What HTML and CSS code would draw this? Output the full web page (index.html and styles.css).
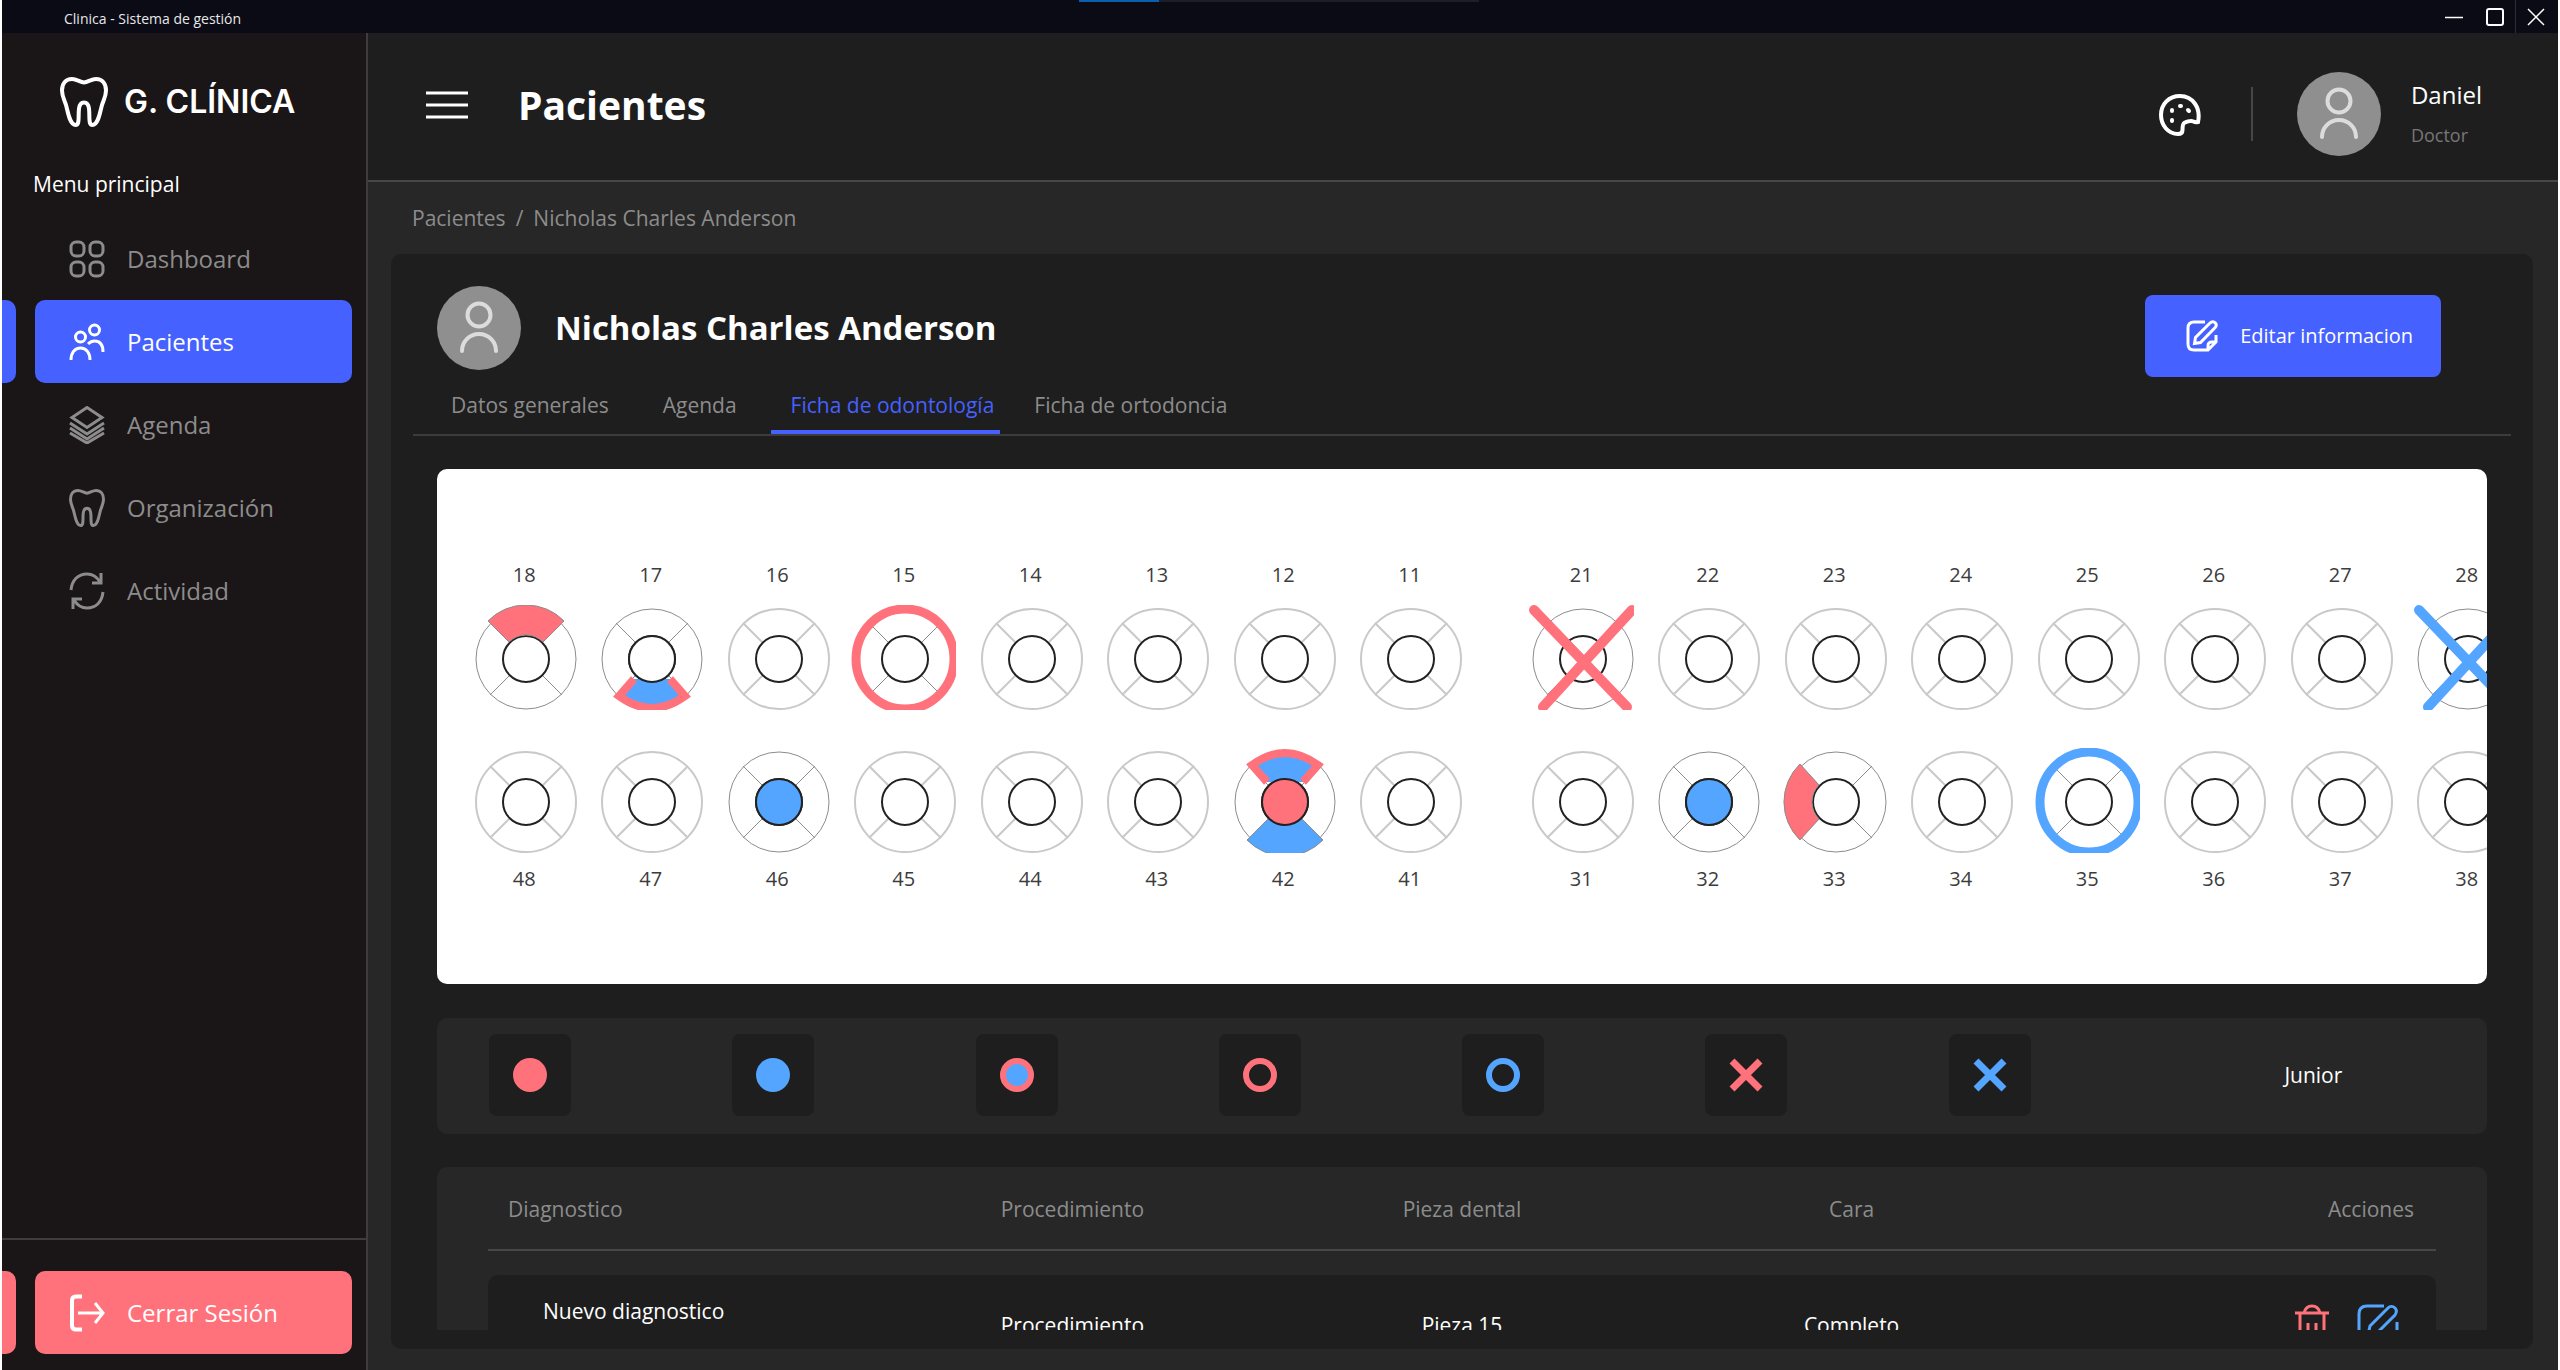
FILE: index.html
```html
<!DOCTYPE html>
<html lang="es">
<head>
<meta charset="utf-8">
<title>Clinica - Sistema de gestión</title>
<link rel="stylesheet" href="styles.css">
</head>
<body>
<svg class="defs" aria-hidden="true">
  <defs>
    <symbol id="tooth" viewBox="-54 -54 105 105">
      <circle r="50" fill="none" stroke="currentColor"/>
      <path d="M-36-36-17-17M36-36 17-17M-36 36-17 17M36 36 17 17" stroke="currentColor"/>
      <circle class="core" r="23"/>
    </symbol>
    <symbol id="molar" viewBox="0 0 48 50">
      <path d="M24 5.500C20 5 16.500 2 12 2 5.500 2 2 7 2 13.500c0 5.500 2 8.500 4 14.500 1.800 6 3.500 20 9.500 20 4.500 0 2.500-8 3.500-16.500.6-4.500 2-6 5-6s4.400 1.500 5 6c1 8.500-1 16.500 3.500 16.500 6 0 7.700-14 9.500-20 2-6 4-9 4-14.500C46 7 42.500 2 36 2c-4.500 0-8 3-12 3.500Z"/>
    </symbol>
    <symbol id="person" viewBox="0 0 84 84">
      <circle class="disc" cx="42" cy="42" r="42"/>
      <circle cx="42" cy="29" r="11.500"/>
      <path d="M25 65c0-9 7-17 17-17s17 8 17 17" stroke-linecap="round"/>
    </symbol>
    <symbol id="edit" viewBox="0 0 32 32">
      <path d="M19 2H8C4 2 2 4 2 8v16c0 4 2 6 6 6h14l8-8v-7M30 22h-4c-3 0-4 1-4 4v4M8.500 23.500l1-6L24 3c2-2 4-1.500 5.200-.2 1.200 1.300 1.200 3.200 0 4.700L14.500 22.500Z"/>
    </symbol>
  </defs>
</svg>

<div class="window">
  <div class="titlebar">
    <span class="titlebar-text">Clinica - Sistema de gestión</span>
    <span class="progress"><i></i></span>
    <div class="window-controls">
      <button type="button" aria-label="Minimizar"><svg viewBox="0 0 18 18"><path d="M0 9.500h18"/></svg></button>
      <button type="button" aria-label="Maximizar"><svg viewBox="0 0 18 18"><rect x="1" y="1" width="16" height="16" rx="2" stroke-width="2"/></svg></button>
      <button type="button" class="close" aria-label="Cerrar"><svg viewBox="0 0 18 18"><path d="M1 1l16 16M17 1 1 17"/></svg></button>
    </div>
  </div>

  <aside class="sidebar">
    <div class="brand">
      <svg class="brand-icon"><use href="#molar"/></svg>
      <span>G. CLÍNICA</span>
    </div>
    <p class="menu-title">Menu principal</p>
    <nav class="menu">
      <a class="menu-item" href="#dashboard">
        <svg viewBox="0 0 36 38"><rect x="2" y="2" width="13" height="14" rx="5"/><rect x="21" y="2" width="13" height="14" rx="5"/><rect x="2" y="22" width="13" height="14" rx="5"/><rect x="21" y="22" width="13" height="14" rx="5"/></svg>
        <span>Dashboard</span>
      </a>
      <a class="menu-item active" href="#pacientes">
        <svg viewBox="0 0 36 38"><circle cx="11.500" cy="14" r="5"/><circle cx="25.500" cy="7" r="5"/><path d="M2 37c0-7 3.500-12 9.500-12S21 30 21 37M19 21c2-2 4-3 6.500-3 5.500 0 8.500 4 8.500 11"/></svg>
        <span>Pacientes</span>
      </a>
      <a class="menu-item" href="#agenda">
        <svg viewBox="0 0 36 38"><path d="M18 1.500 33 11.500 18 21.500 3 11.500ZM1 17l17 11 17-11M1 22l17 11 17-11M1 27l17 10 17-10"/></svg>
        <span>Agenda</span>
      </a>
      <a class="menu-item" href="#organizacion">
        <svg class="molar" viewBox="0 0 48 50" preserveAspectRatio="none"><use href="#molar" width="48" height="50"/></svg>
        <span>Organización</span>
      </a>
      <a class="menu-item" href="#actividad">
        <svg viewBox="0 0 36 38"><path d="M2 18C3 8 9 2 18 2c6 0 10 3 13 8M32 1v10H23M34 20c-1 10-7 16-16 16-6 0-10-3-13-8M4 37V27h9"/></svg>
        <span>Actividad</span>
      </a>
    </nav>
    <div class="sidebar-foot">
      <button type="button" class="menu-item logout">
        <svg viewBox="0 0 36 38"><path d="M13 2.500H7c-3 0-4 1.500-4 4v25c0 2.500 1 4 4 4h6" stroke-width="4"/><path d="M9 19h24M26 9l8 10-8 10"/></svg>
        <span>Cerrar Sesión</span>
      </button>
    </div>
  </aside>

  <header class="topbar">
    <button type="button" class="burger" aria-label="Menu"><svg viewBox="0 0 42 30"><path d="M0 3h42M0 15h42M0 27h42"/></svg></button>
    <h1>Pacientes</h1>
    <button type="button" class="palette" aria-label="Tema">
      <svg viewBox="0 0 42 42"><path d="M39 28c3-14-5-26-18-26C10 2 2 10 2 21c0 10 7 19 17 19 3 0 4.500-1 4.500-4 0-7 1-8 8-9 3-.500 3 2 7.500 1Z"/><path class="dots" d="M13 16v1M13 26v1M21 12h1M29 16l1 1"/></svg>
    </button>
    <div class="account">
      <svg class="avatar"><use href="#person"/></svg>
      <div class="account-text"><strong>Daniel</strong><small>Doctor</small></div>
    </div>
  </header>

  <main class="content">
    <nav class="crumbs"><a href="#pacientes">Pacientes</a><span>/</span><span>Nicholas Charles Anderson</span></nav>
    <section class="card">
      <div class="patient">
        <svg class="avatar"><use href="#person"/></svg>
        <h2>Nicholas Charles Anderson</h2>
        <button type="button" class="edit-button"><svg><use href="#edit"/></svg>Editar informacion</button>
      </div>
      <nav class="tabs">
        <a href="#datos">Datos generales</a>
        <a href="#citas">Agenda</a>
        <a href="#odontologia" class="active">Ficha de odontología</a>
        <a href="#ortodoncia">Ficha de ortodoncia</a>
      </nav>

      <div class="scroll">
        <div class="chart">
          <div class="arch">
            <div class="quadrant">
              <div class="piece marked"><span>18</span><svg viewBox="-54 -54 105 105"><use href="#tooth" x="-54" y="-54" width="105" height="105"/><path class="red outlined" d="M-17-17-38-38A53 53 0 0 1 38-38L17-17A24 24 0 0 0-17-17Z"/></svg></div>
              <div class="piece marked"><span>17</span><svg viewBox="-54 -54 105 105"><use href="#tooth" x="-54" y="-54" width="105" height="105"/><path class="both" d="M-18 20-33 37Q0 61 33 37L18 20"/><circle class="core" r="23"/></svg></div>
              <div class="piece"><span>16</span><svg><use href="#tooth"/></svg></div>
              <div class="piece marked"><span>15</span><svg viewBox="-54 -54 105 105"><use href="#tooth" x="-54" y="-54" width="105" height="105"/><ellipse class="ring-red" rx="49" ry="50"/></svg></div>
              <div class="piece"><span>14</span><svg><use href="#tooth"/></svg></div>
              <div class="piece"><span>13</span><svg><use href="#tooth"/></svg></div>
              <div class="piece"><span>12</span><svg><use href="#tooth"/></svg></div>
              <div class="piece"><span>11</span><svg><use href="#tooth"/></svg></div>
            </div>
            <div class="quadrant">
              <div class="piece marked"><span>21</span><svg viewBox="-54 -54 105 105"><use href="#tooth" x="-54" y="-54" width="105" height="105"/><path class="ring-red" d="M-49-49 44 48M49-49-40 48"/></svg></div>
              <div class="piece"><span>22</span><svg><use href="#tooth"/></svg></div>
              <div class="piece"><span>23</span><svg><use href="#tooth"/></svg></div>
              <div class="piece"><span>24</span><svg><use href="#tooth"/></svg></div>
              <div class="piece"><span>25</span><svg><use href="#tooth"/></svg></div>
              <div class="piece"><span>26</span><svg><use href="#tooth"/></svg></div>
              <div class="piece"><span>27</span><svg><use href="#tooth"/></svg></div>
              <div class="piece marked"><span>28</span><svg viewBox="-54 -54 105 105"><use href="#tooth" x="-54" y="-54" width="105" height="105"/><path class="ring-blue" d="M-49-49 44 48M49-49-40 48"/></svg></div>
            </div>
          </div>
          <div class="arch lower">
            <div class="quadrant">
              <div class="piece"><span>48</span><svg><use href="#tooth"/></svg></div>
              <div class="piece"><span>47</span><svg><use href="#tooth"/></svg></div>
              <div class="piece marked"><span>46</span><svg viewBox="-54 -54 105 105"><use href="#tooth" x="-54" y="-54" width="105" height="105"/><circle class="core core-blue" r="23"/></svg></div>
              <div class="piece"><span>45</span><svg><use href="#tooth"/></svg></div>
              <div class="piece"><span>44</span><svg><use href="#tooth"/></svg></div>
              <div class="piece"><span>43</span><svg><use href="#tooth"/></svg></div>
              <div class="piece marked"><span>42</span><svg viewBox="-54 -54 105 105"><use href="#tooth" x="-54" y="-54" width="105" height="105"/><path class="blue outlined" d="M-17 17-38 38A53 53 0 0 0 38 38L17 17Z"/><path class="both" d="M-18-20-33-37Q0-61 33-37L18-20"/><circle class="core core-red" r="23"/></svg></div>
              <div class="piece"><span>41</span><svg><use href="#tooth"/></svg></div>
            </div>
            <div class="quadrant">
              <div class="piece"><span>31</span><svg><use href="#tooth"/></svg></div>
              <div class="piece marked"><span>32</span><svg viewBox="-54 -54 105 105"><use href="#tooth" x="-54" y="-54" width="105" height="105"/><circle class="core core-blue" r="23"/></svg></div>
              <div class="piece marked"><span>33</span><svg viewBox="-54 -54 105 105"><use href="#tooth" x="-54" y="-54" width="105" height="105"/><path class="red outlined" d="M-17-17-36-38A53 53 0 0 0-36 38L-17 17A24 24 0 0 1-17-17Z"/></svg></div>
              <div class="piece"><span>34</span><svg><use href="#tooth"/></svg></div>
              <div class="piece marked"><span>35</span><svg viewBox="-54 -54 105 105"><use href="#tooth" x="-54" y="-54" width="105" height="105"/><ellipse class="ring-blue" rx="49" ry="50"/></svg></div>
              <div class="piece"><span>36</span><svg><use href="#tooth"/></svg></div>
              <div class="piece"><span>37</span><svg><use href="#tooth"/></svg></div>
              <div class="piece"><span>38</span><svg><use href="#tooth"/></svg></div>
            </div>
          </div>
        </div>

        <div class="tools">
          <button type="button" aria-label="Relleno rojo"><svg viewBox="0 0 36 36"><circle class="red" cx="18" cy="18" r="17"/></svg></button>
          <button type="button" aria-label="Relleno azul"><svg viewBox="0 0 36 36"><circle class="blue" cx="18" cy="18" r="17"/></svg></button>
          <button type="button" aria-label="Relleno azul con borde rojo"><svg viewBox="0 0 36 36"><circle class="both" cx="18" cy="18" r="14"/></svg></button>
          <button type="button" aria-label="Circulo rojo"><svg viewBox="0 0 36 36"><circle class="ring-red" cx="18" cy="18" r="14"/></svg></button>
          <button type="button" aria-label="Circulo azul"><svg viewBox="0 0 36 36"><circle class="ring-blue" cx="18" cy="18" r="14"/></svg></button>
          <button type="button" aria-label="Cruz roja"><svg viewBox="0 0 36 36"><path class="ring-red" d="M4 4l28 28M32 4 4 32"/></svg></button>
          <button type="button" aria-label="Cruz azul"><svg viewBox="0 0 36 36"><path class="ring-blue" d="M4 4l28 28M32 4 4 32"/></svg></button>
          <span>Junior</span>
        </div>

        <div class="diagnoses">
          <table>
            <thead>
              <tr><th>Diagnostico</th><th>Procedimiento</th><th>Pieza dental</th><th>Cara</th><th>Acciones</th></tr>
            </thead>
            <tbody>
              <tr>
                <td>Nuevo diagnostico<small>Descripción</small></td>
                <td>Procedimiento</td>
                <td>Pieza 15</td>
                <td>Completo</td>
                <td>
                  <div class="actions">
                    <button type="button" class="delete" aria-label="Eliminar"><svg viewBox="0 0 34 42"><path d="M0 9h34M9 9c1-4 3-7 8-7s7 3 8 7M5 9v27c0 3 1 4 4 4h16c3 0 4-1 4-4V9M13 19v14M21 19v14"/></svg></button>
                    <button type="button" class="modify" aria-label="Editar"><svg viewBox="0 0 42 42"><path d="M27 2H10C4 2 2 5 2 10v22c0 5 2 8 8 8h22c6 0 8-3 8-8V18M11 31l2-9L31 4c2-2 5-2 7 0s2 4 0 7L20 29Z"/></svg></button>
                  </div>
                </td>
              </tr>
            </tbody>
          </table>
        </div>
      </div>
    </section>
  </main>
</div>
</body>
</html>
```
FILE: styles.css
```css
* {
  box-sizing: border-box;
}

:root {
  --base: #272727;
  --surface: #1e1e1e;
  --line: #474747;
  --muted: #8c8c8c;
  --blue: #4561ff;
  --red: #ff727b;
  --sky: #54a5ff;
}

body {
  margin: 0;
  padding: 0 2px;
  background: #fff;
  color: #fff;
  font: 21px/28px "Open Sans", "Noto Sans", sans-serif;
}

h1, h2, p {
  margin: 0;
}

a {
  color: inherit;
  text-decoration: none;
}

button {
  margin: 0;
  padding: 0;
  border: 0;
  background: none;
  color: inherit;
  font: inherit;
}

svg {
  display: block;
  flex: none;
  fill: none;
  stroke: currentColor;
}

.defs {
  position: absolute;
  width: 0;
  height: 0;
}

.window {
  display: grid;
  grid-template: 33px 149px minmax(0, 1fr) / 366px minmax(0, 1fr);
  height: 100vh;
  overflow: hidden;
  background: var(--base);
}

/* Title bar */

.titlebar {
  position: relative;
  grid-column: 1 / -1;
  display: flex;
  align-items: center;
  justify-content: space-between;
  padding: 0 2px 0 62px;
  background: #0a0b15;
}

.titlebar-text {
  padding-top: 4px;
  font-size: 14px;
  line-height: 20px;
  color: #e8e8e8;
}

.progress {
  position: absolute;
  top: 0;
  left: 1077px;
  width: 400px;
  height: 2px;
  background: #1d1e28;
}

.progress i {
  display: block;
  width: 80px;
  height: 2px;
  background: #0a5fae;
}

.window-controls {
  display: flex;
  height: 100%;
}

.window-controls button {
  display: grid;
  place-items: center;
  width: 41px;
}

.window-controls .close {
  border-left: 1px solid #2d2e38;
}

.window-controls svg {
  width: 18px;
  height: 18px;
  stroke-width: 1.5;
}

/* Sidebar */

.sidebar {
  grid-row: 2 / 4;
  display: flex;
  flex-direction: column;
  border-right: 2px solid #3e3c3d;
  background: #1a1516;
}

.brand {
  display: flex;
  align-items: center;
  gap: 16px;
  padding: 44px 0 0 58px;
  font: 600 32px/50px Inter, sans-serif;
}

.brand-icon {
  width: 48px;
  height: 50px;
  stroke-width: 4;
}

.menu-title {
  padding: 43px 0 0 31px;
}

.menu {
  flex: 1;
  padding-top: 19px;
}

.menu-item {
  position: relative;
  display: flex;
  align-items: center;
  gap: 22px;
  height: 83px;
  margin: 0 14px 0 33px;
  padding-left: 34px;
  border-radius: 10px;
  color: var(--muted);
  font-size: 24px;
}

.menu-item svg {
  width: 36px;
  height: 38px;
  stroke-width: 3;
}

.menu-item .molar {
  stroke-width: 4;
}

.menu-item.active {
  background: var(--blue);
  color: #fff;
}

.menu-item.active::before,
.logout::before {
  content: "";
  position: absolute;
  top: 0;
  bottom: 0;
  left: -33px;
  width: 14px;
  border-radius: 0 10px 10px 0;
  background: inherit;
}

.sidebar-foot {
  display: flex;
  padding: 31px 0 16px;
  border-top: 2px solid #3e3c3d;
}

.logout {
  flex: 1;
  background: var(--red);
  color: #fff;
}

/* Top bar */

.topbar {
  display: flex;
  align-items: center;
  padding: 0 76px 4px 58px;
  border-bottom: 2px solid var(--line);
  background: var(--surface);
}

.burger svg {
  width: 42px;
  height: 30px;
  stroke-width: 3;
}

.topbar h1 {
  flex: 1;
  margin-left: 50px;
  font-size: 39px;
  line-height: 52px;
}

.palette {
  margin-top: 20px;
}

.palette svg {
  width: 42px;
  height: 42px;
  stroke-width: 4;
}

.dots {
  stroke-linecap: round;
}

.account {
  display: flex;
  align-items: center;
  gap: 30px;
  margin: 18px 0 0 50px;
}

.account::before {
  content: "";
  width: 2px;
  height: 54px;
  margin-right: 14px;
  background: var(--line);
}

.avatar {
  width: 84px;
  height: 84px;
  color: #dcdcdc;
  stroke-width: 4;
}

.disc {
  fill: #8f8f8f;
  stroke: none;
}

.account-text {
  display: grid;
  gap: 12px;
  padding-bottom: 2px;
}

.account-text strong {
  font-size: 24px;
  line-height: 32px;
  font-weight: 400;
}

.account-text small {
  font-size: 18px;
  line-height: 24px;
  color: #777;
}

/* Patient card */

.content {
  display: flex;
  flex-direction: column;
  padding: 0 25px 21px 23px;
}

.crumbs {
  display: flex;
  gap: 10px;
  padding: 22px 0 22px 21px;
  color: var(--muted);
}

.card {
  flex: 1;
  display: flex;
  flex-direction: column;
  min-height: 0;
  padding: 32px 46px 19px;
  border-radius: 10px;
  background: var(--surface);
}

.patient {
  display: flex;
  align-items: flex-start;
  gap: 34px;
  padding-right: 46px;
}

.patient h2 {
  flex: 1;
  font-size: 33px;
  line-height: 84px;
}

.edit-button {
  display: flex;
  align-items: center;
  gap: 22px;
  height: 82px;
  margin-top: 9px;
  padding: 0 28px 0 41px;
  border-radius: 8px;
  background: var(--blue);
  font-size: 20px;
}

.edit-button svg {
  width: 32px;
  height: 32px;
  stroke-width: 3;
}

.tabs {
  display: flex;
  gap: 14px;
  margin: 14px -24px 0;
  padding-left: 18px;
  border-bottom: 2px solid #3c3c3c;
  color: var(--muted);
}

.tabs a {
  padding: 0 20px 11px;
}

.tabs .active {
  padding-right: 6px;
  border-bottom: 4px solid var(--blue);
  color: var(--blue);
}

.scroll {
  flex: 1;
  min-height: 0;
  margin-top: 33px;
  overflow: hidden;
}

/* Dental chart */

.chart {
  display: grid;
  gap: 38px;
  padding: 92px 0 91px 24px;
  overflow: hidden;
  border-radius: 10px;
  background: #fff;
}

.arch {
  display: flex;
  gap: 45px;
}

.quadrant {
  flex: none;
  display: grid;
  grid-template-columns: repeat(8, 1fr);
  width: 1012px;
}

.piece {
  display: flex;
  flex-direction: column;
  align-items: center;
  gap: 16px;
  color: #c9c9c9;
  stroke-width: 2;
}

.lower .piece {
  flex-direction: column-reverse;
  gap: 12px;
}

.marked {
  color: #8c8c8c;
  stroke-width: 1;
}

.piece span {
  color: #3c3c3c;
  font-size: 20px;
}

.piece svg {
  width: 105px;
  height: 105px;
}

.core {
  fill: #fff;
  stroke: #222;
  stroke-width: 2;
}

.core-red {
  fill: var(--red);
}

.core-blue {
  fill: var(--sky);
}

.red {
  fill: var(--red);
  stroke: none;
}

.blue {
  fill: var(--sky);
  stroke: none;
}

.outlined {
  stroke: #8c8c8c;
}

.both {
  fill: var(--sky);
  stroke: var(--red);
  stroke-width: 8;
}

.ring-red,
.ring-blue {
  stroke-width: 9;
}

.piece path.ring-red,
.piece path.ring-blue {
  stroke-width: 10;
  stroke-linecap: round;
}

.ring-red {
  stroke: var(--red);
}

.ring-blue {
  stroke: var(--sky);
}

/* Marking tools */

.tools {
  display: grid;
  grid-template-columns: repeat(8, 1fr);
  align-items: center;
  margin-top: 34px;
  padding: 16px 52px 18px;
  border-radius: 10px;
  background: var(--base);
}

.tools button {
  display: grid;
  place-items: center;
  width: 82px;
  height: 82px;
  border-radius: 8px;
  background: var(--surface);
}

.tools svg {
  width: 36px;
  height: 36px;
}

.tools .both,
.tools .ring-red,
.tools .ring-blue {
  stroke-width: 6;
}

.tools path.ring-red,
.tools path.ring-blue {
  stroke-width: 7;
}

.tools span {
  justify-self: center;
}

/* Diagnoses */

.diagnoses {
  margin-top: 33px;
  padding: 0 51px 40px;
  border-radius: 10px;
  background: var(--base);
}

table {
  width: 100%;
  table-layout: fixed;
  border-spacing: 0;
}

th {
  height: 84px;
  padding: 2px 22px 0;
  border-bottom: 2px solid var(--line);
  color: var(--muted);
  font-weight: 400;
}

th:first-child {
  padding-left: 20px;
  text-align: left;
}

th:last-child {
  text-align: right;
}

tbody::before {
  content: "";
  display: block;
  height: 24px;
}

td {
  height: 100px;
  padding: 0;
  background: var(--surface);
  text-align: center;
}

td:first-child {
  padding-left: 55px;
  border-radius: 10px 0 0 10px;
  text-align: left;
}

td:last-child {
  padding-right: 37px;
  border-radius: 0 10px 10px 0;
}

td small {
  display: block;
  color: var(--muted);
  font-size: 18px;
}

.actions {
  display: flex;
  justify-content: flex-end;
  gap: 28px;
}

.actions svg {
  width: 42px;
  height: 42px;
  stroke-width: 3;
}

.actions .delete svg {
  width: 34px;
}

.delete {
  color: var(--red);
}

.modify {
  color: var(--sky);
}
```
